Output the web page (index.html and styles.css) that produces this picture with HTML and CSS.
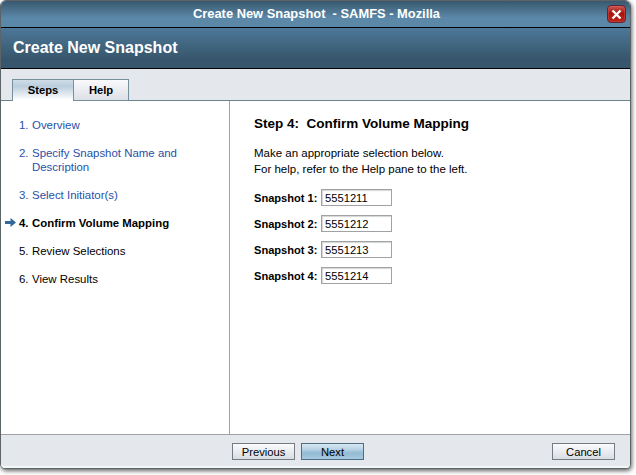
FILE: index.html
```html
<!DOCTYPE html>
<html lang="en">
<head>
<meta charset="utf-8">
<title>Create New Snapshot - SAMFS - Mozilla</title>
<link rel="stylesheet" href="styles.css">
</head>
<body>
<div class="window">
  <div class="titlebar">
    <span class="caption">Create New Snapshot&nbsp; - SAMFS - Mozilla</span>
    <button class="close" aria-label="Close"><svg width="11" height="11" viewBox="0 0 11 11"><path d="M1.5 1.5L9.5 9.5M9.5 1.5L1.5 9.5" stroke="#fff" stroke-width="2.3"/></svg></button>
  </div>
  <header class="masthead">Create New Snapshot</header>
  <nav class="tabs"><div class="tab active">Steps</div><div class="tab help">Help</div></nav>
  <main class="content">
    <ol class="steps">
      <li class="step link"><span class="marker"></span><span class="num">1.</span><span>Overview</span></li>
      <li class="step link"><span class="marker"></span><span class="num">2.</span><span>Specify Snapshot Name and<br>Description</span></li>
      <li class="step link"><span class="marker"></span><span class="num">3.</span><span>Select Initiator(s)</span></li>
      <li class="step current"><span class="marker"><svg width="11" height="9" viewBox="0 0 11 9"><path d="M0 3H5.5V0L11 4.5L5.5 9V6H0Z" fill="#336699"/></svg></span><span class="num">4.</span><span>Confirm Volume Mapping</span></li>
      <li class="step"><span class="marker"></span><span class="num">5.</span><span>Review Selections</span></li>
      <li class="step"><span class="marker"></span><span class="num">6.</span><span>View Results</span></li>
    </ol>
    <section class="panel">
      <h1>Step 4:&nbsp; Confirm Volume Mapping</h1>
      <p>Make an appropriate selection below.<br>For help, refer to the Help pane to the left.</p>
      <div class="field"><label for="s1">Snapshot 1:</label><input id="s1" value="5551211"></div>
      <div class="field"><label for="s2">Snapshot 2:</label><input id="s2" value="5551212"></div>
      <div class="field"><label for="s3">Snapshot 3:</label><input id="s3" value="5551213"></div>
      <div class="field"><label for="s4">Snapshot 4:</label><input id="s4" value="5551214"></div>
    </section>
  </main>
  <footer class="actions">
    <button class="btn">Previous</button>
    <button class="btn primary">Next</button>
    <button class="btn cancel">Cancel</button>
  </footer>
</div>
</body>
</html>
```
FILE: styles.css
```css
* { box-sizing: border-box; }
body {
  margin: 0;
  min-height: 475px;
  background: #fff;
  font: 11.45px/14px "Liberation Sans", Arial, sans-serif;
  color: #000;
}
.window {
  width: 631px;
  height: 469px;
  display: flex;
  flex-direction: column;
  border: 1px solid #5c6467;
  border-radius: 6px 6px 5px 5px;
  box-shadow: 1px 2px 4px rgba(0, 0, 0, 0.6);
  overflow: hidden;
  background: #fff;
}
.titlebar {
  height: 27px;
  flex: none;
  display: flex;
  align-items: center;
  border-bottom: 1px solid #000;
  background: linear-gradient(#39586f, #5b88a8 65%, #5b88a6);
  color: #fff;
}
.caption {
  flex: 1;
  padding-left: 28px;
  text-align: center;
  font-size: 12.9px;
  font-weight: bold;
}
.close {
  width: 19px;
  height: 18px;
  margin: 0 4px 0 3px;
  padding: 0;
  display: flex;
  align-items: center;
  justify-content: center;
  border: 1px solid #5e2433;
  border-radius: 4px;
  background: linear-gradient(#c75a55, #a8150f 45%, #b8241c);
  box-shadow: inset 0 0 0 1px rgba(225, 100, 90, 0.35);
}
.masthead {
  height: 41px;
  flex: none;
  padding-left: 12px;
  border-bottom: 1px solid #000;
  background: linear-gradient(#4d7899, #36566b 78%, #38566e);
  color: #fff;
  font-size: 16px;
  font-weight: bold;
  line-height: 39px;
}
.tabs {
  height: 32px;
  flex: none;
  display: flex;
  align-items: flex-end;
  padding-left: 11px;
  background: linear-gradient(#6b828d, #6b828d) bottom / 100% 1px no-repeat #e4e7ec;
}
.tab {
  height: 22px;
  border: 1px solid #75909c;
  text-align: center;
  font-weight: bold;
  font-size: 11.2px;
  line-height: 21px;
}
.active {
  width: 62px;
  border-bottom: 0;
  background: linear-gradient(#cfdde8, #bacddd 30%, #fff 95%);
}
.help {
  width: 55px;
  border-left: 0;
  background: linear-gradient(#fafafc, #dddfe7);
}
.content {
  flex: 1;
  display: flex;
}
.steps {
  width: 229px;
  margin: 0;
  padding: 17px 0 0 4px;
  list-style: none;
  border-right: 1px solid #a0a2a5;
}
.step {
  display: flex;
  margin-bottom: 14px;
}
.marker {
  width: 14px;
  padding-top: 2px;
  line-height: 0;
}
.num { width: 13px; }
.link { color: #2850a8; }
.current { font-weight: bold; font-size: 11.4px; }
.panel { padding: 14px 0 0 24px; }
h1 {
  margin: 0;
  font-size: 13.5px;
  line-height: 18px;
}
p { margin: 12px 0 11px; font-size: 11.5px; line-height: 16px; }
.field {
  height: 18px;
  margin-bottom: 8px;
  display: flex;
  align-items: center;
}
label { width: 67px; padding-top: 1px; font-weight: bold; font-size: 11.1px; }
input {
  width: 71px;
  height: 17px;
  padding: 1px 0 0 3px;
  border: 1px solid #a0a3a6;
  border-radius: 0;
  box-shadow: inset 1px 1px 1px #d5d5d5;
  font: inherit;
  font-size: 11.2px;
}
.actions {
  height: 34px;
  flex: none;
  display: flex;
  align-items: center;
  gap: 6px;
  padding: 0 15px 0 231px;
  border-top: 1px solid #a0a2a5;
  background: linear-gradient(#e4e7ec 92%, #f2f8f7 96%);
}
.btn {
  width: 63px;
  height: 17px;
  padding: 0;
  border: 1px solid #747b82;
  background: linear-gradient(#fbfbfd, #d9dce3);
  color: #000;
  font: inherit;
  font-size: 11.2px;
}
.primary {
  border-color: #4e6e82;
  background: linear-gradient(#d5e7f2, #b9d4e6 35%, #93bbd4 60%, #a6cae0);
}
.cancel { margin-left: auto; }
```
